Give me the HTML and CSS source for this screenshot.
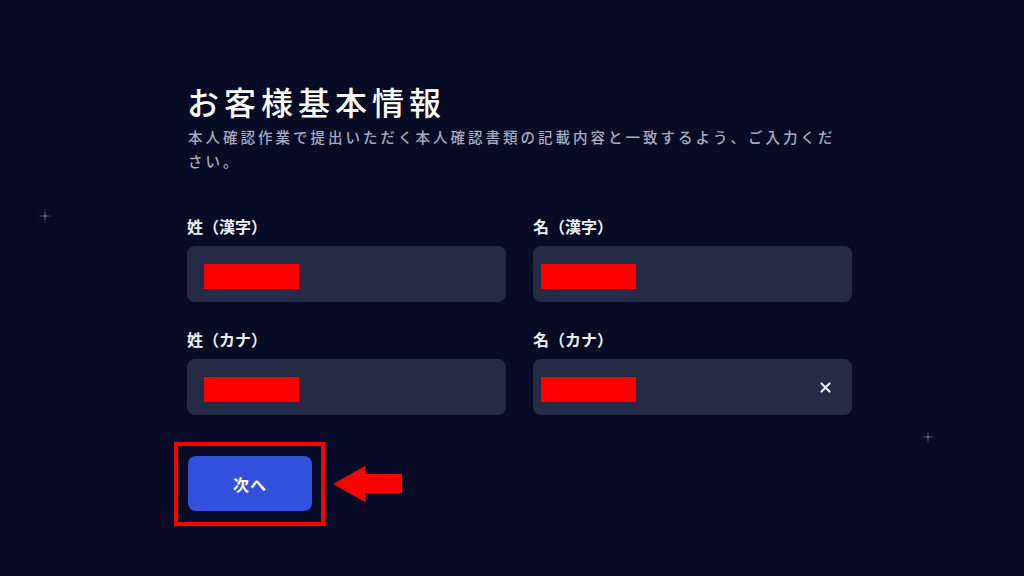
FILE: index.html
```html
<!DOCTYPE html>
<html lang="ja">
<head>
<meta charset="utf-8">
<title>お客様基本情報</title>
<link rel="stylesheet" href="styles.css">
</head>
<body>
<span class="star star-a"></span>
<span class="star star-b"></span>
<main class="page">
  <h1 class="title">お客様基本情報</h1>
  <p class="lead">本人確認作業で提出いただく本人確認書類の記載内容と一致するよう、ご入力ください。</p>
  <div class="form-grid">
    <div class="field">
      <div class="label">姓（漢字）</div>
      <div class="input"><span class="mask"></span></div>
    </div>
    <div class="field">
      <div class="label">名（漢字）</div>
      <div class="input input-tight"><span class="mask"></span></div>
    </div>
    <div class="field">
      <div class="label">姓（カナ）</div>
      <div class="input"><span class="mask"></span></div>
    </div>
    <div class="field">
      <div class="label">名（カナ）</div>
      <div class="input input-tight"><span class="mask"></span><svg class="clear" width="11" height="11" viewBox="0 0 11 11"><path d="M1.5 1.5 L9.5 9.5 M9.5 1.5 L1.5 9.5" stroke="#e6e8f0" stroke-width="2.2" stroke-linecap="round" fill="none"/></svg></div>
    </div>
  </div>
  <div class="actions">
    <div class="highlight"><button class="btn">次へ</button></div>
    <svg class="arrow" width="69" height="36" viewBox="0 0 69 36"><polygon points="0,18 32,0 32,8 69,8 69,27 32,27 32,36" fill="#ff0000"/></svg>
  </div>
</main>
</body>
</html>
```
FILE: styles.css
```css
html, body {
  margin: 0;
  padding: 0;
}
body {
  width: 1024px;
  height: 576px;
  overflow: hidden;
  background: #070b26;
  font-family: "Noto Sans CJK JP", "Noto Sans", sans-serif;
  color: #ffffff;
  position: relative;
}
.star {
  position: absolute;
  width: 14px;
  height: 14px;
  background:
    linear-gradient(to right, transparent 0, rgba(180,190,230,0.35) 50%, transparent 100%) center / 14px 2px no-repeat,
    linear-gradient(to bottom, transparent 0, rgba(180,190,230,0.35) 50%, transparent 100%) center / 2px 14px no-repeat;
}
.star-a { left: 38px; top: 209px; }
.star-b { left: 921px; top: 430px; }
.page {
  padding: 82px 0 0 187px;
  width: 666px;
}
.title {
  margin: 0;
  font-size: 32px;
  line-height: 38px;
  font-weight: 500;
  letter-spacing: 5px;
  color: #ffffff;
}
.lead {
  margin: 5px 0 0 1px;
  font-size: 14.5px;
  line-height: 24px;
  letter-spacing: 3px;
  color: #a7abbf;
  font-weight: 500;
  width: 662px;
}
.form-grid {
  margin-top: 43px;
  display: grid;
  grid-template-columns: 319px 319px;
  column-gap: 27px;
  row-gap: 27px;
}
.label {
  font-size: 16px;
  line-height: 20px;
  font-weight: 700;
  color: #eceef5;
}
.input {
  margin-top: 10px;
  height: 56px;
  background: #252a45;
  border-radius: 8px;
  box-sizing: border-box;
  padding: 0 21px 0 17px;
  display: flex;
  align-items: center;
  justify-content: space-between;
}
.input-tight {
  padding-left: 8px;
}
.mask {
  width: 95px;
  height: 25px;
  background: #ff0000;
  margin-top: 4px;
}
.clear {
  display: block;
}
.actions {
  margin-top: 27px;
  margin-left: -13px;
  display: flex;
  align-items: center;
  gap: 8px;
}
.highlight {
  border: 4px solid #ff0000;
  padding: 10px 9px 11px 10px;
  display: flex;
}
.btn {
  width: 124px;
  height: 55px;
  border: none;
  border-radius: 8px;
  background: #3351df;
  color: #ffffff;
  font-family: "Noto Sans CJK JP", "Noto Sans", sans-serif;
  font-size: 16px;
  font-weight: 700;
  letter-spacing: 1px;
  cursor: pointer;
}
.arrow {
  display: block;
}
```
